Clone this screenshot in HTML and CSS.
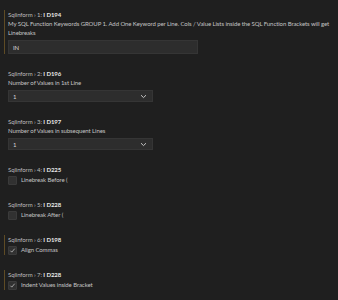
FILE: index.html
```html
<!DOCTYPE html>
<html lang="en">

<head>
    <meta charset="UTF-8">
    <meta name="viewport" content="width=device-width, initial-scale=1.0">
    <title>Sqlinform settings</title>
    <link rel="stylesheet" href="styles.css">
</head>

<body>
    <div class="settings">

        <div class="setting modified">
            <div class="title">Sqlinform › 1: <b>I D194</b></div>
            <div class="desc">My SQL Function Keywords GROUP 1. Add One Keyword per Line. Cols / Value Lists inside the SQL Function Brackets will get Linebreaks</div>
            <div class="textbox">IN</div>
        </div>

        <div class="setting">
            <div class="title">Sqlinform › 2: <b>I D196</b></div>
            <div class="desc">Number of Values in 1st Line</div>
            <div class="select">
                <span>1</span>
                <svg width="7" height="5" viewBox="0 0 7 5"><path d="M1 1.2 L3.5 3.6 L6 1.2" fill="none" stroke="#c5c5c5" stroke-width="1"/></svg>
            </div>
        </div>

        <div class="setting">
            <div class="title">Sqlinform › 3: <b>I D197</b></div>
            <div class="desc">Number of Values in subsequent Lines</div>
            <div class="select">
                <span>1</span>
                <svg width="7" height="5" viewBox="0 0 7 5"><path d="M1 1.2 L3.5 3.6 L6 1.2" fill="none" stroke="#c5c5c5" stroke-width="1"/></svg>
            </div>
        </div>

        <div class="setting">
            <div class="title">Sqlinform › 4: <b>I D225</b></div>
            <label class="check"><span class="box"></span>Linebreak Before (</label>
        </div>

        <div class="setting">
            <div class="title">Sqlinform › 5: <b>I D228</b></div>
            <label class="check"><span class="box"></span>Linebreak After (</label>
        </div>

        <div class="setting modified">
            <div class="title">Sqlinform › 6: <b>I D198</b></div>
            <label class="check"><span class="box"><svg width="9" height="9" viewBox="0 0 9 9"><path d="M1.8 4.8 L3.6 6.6 L7.3 2.2" fill="none" stroke="#d0d0d0" stroke-width="0.9"/></svg></span>Align Commas</label>
        </div>

        <div class="setting modified">
            <div class="title">Sqlinform › 7: <b>I D228</b></div>
            <label class="check"><span class="box"><svg width="9" height="9" viewBox="0 0 9 9"><path d="M1.8 4.8 L3.6 6.6 L7.3 2.2" fill="none" stroke="#d0d0d0" stroke-width="0.9"/></svg></span>Indent Values inside Bracket</label>
        </div>

    </div>
</body>

</html>
```

FILE: styles.css
```css
html,
body {
    margin: 0;
    height: 100%;
    background: #1f1f1f;
}

body {
    font-family: Lato, "Open Sans", sans-serif;
    font-size: 6px;
    letter-spacing: -0.08px;
    color: #cccccc;
}

.settings {
    display: flex;
    flex-direction: column;
    gap: 15px;
    padding: 10px 6px 0 4px;
}

.setting {
    border-left: 1px solid transparent;
    padding-left: 3px;
}

.modified {
    border-left-color: #5e4b25;
}

.title {
    line-height: 9px;
    color: #bdbdbd;
}

.title b {
    color: #e8e8e8;
    font-weight: 700;
}

.desc {
    line-height: 9px;
    color: #c4c4c4;
}

.textbox {
    margin-top: 3px;
    height: 14px;
    line-height: 14px;
    padding-left: 4px;
    background: #2d2d2d;
    border: 1px solid #353535;
    box-sizing: border-box;
    width: 190px;
    color: #d4d4d4;
}

.select {
    margin-top: 3px;
    width: 145px;
    height: 12px;
    box-sizing: border-box;
    background: #2d2d2d;
    border: 1px solid #353535;
    padding: 0 5px 0 4px;
    display: flex;
    align-items: center;
    justify-content: space-between;
    color: #d4d4d4;
}

.check {
    margin-top: 1px;
    display: flex;
    align-items: center;
    gap: 4px;
    line-height: 10px;
    color: #c4c4c4;
}

.box {
    width: 9px;
    height: 9px;
    box-sizing: border-box;
    background: #313131;
    border: 1px solid #3a3a3a;
    border-radius: 1px;
    display: flex;
    align-items: center;
    justify-content: center;
}

.box svg {
    display: block;
}
```
